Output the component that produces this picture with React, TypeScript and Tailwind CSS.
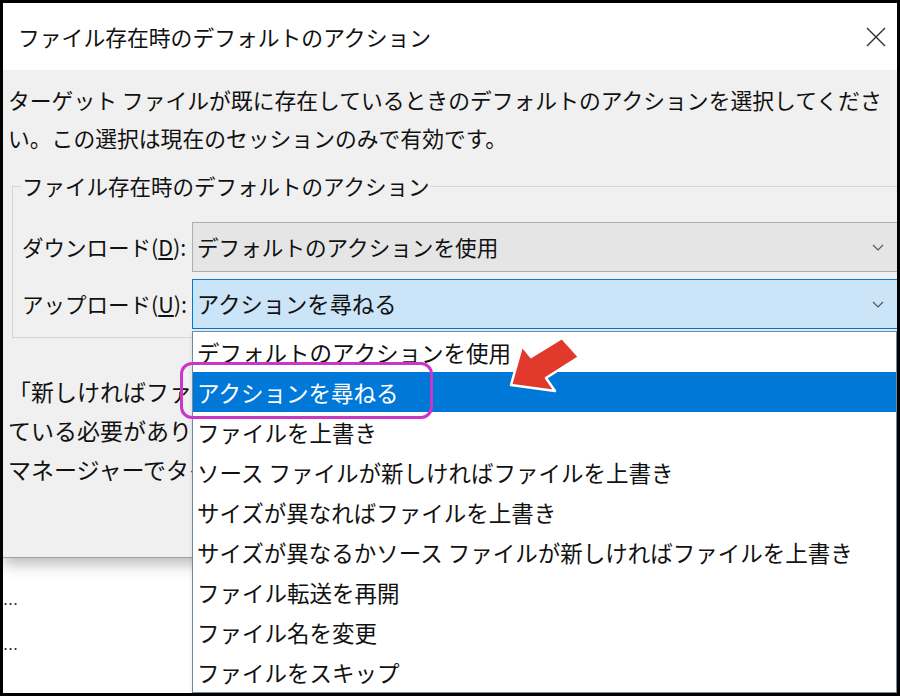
import React from "react";

const items = [
  "デフォルトのアクションを使用",
  "アクションを尋ねる",
  "ファイルを上書き",
  "ソース ファイルが新しければファイルを上書き",
  "サイズが異なればファイルを上書き",
  "サイズが異なるかソース ファイルが新しければファイルを上書き",
  "ファイル転送を再開",
  "ファイル名を変更",
  "ファイルをスキップ",
];

const Chevron = () => (
  <svg width="12" height="7" viewBox="0 0 12 7" fill="none">
    <polyline points="1,1 6,6 11,1" stroke="#555" strokeWidth="1.2" />
  </svg>
);

const App = () => {
  return (
    <div
      className="w-[900px] h-[696px] border-[3px] border-black bg-white relative overflow-hidden text-[#111]"
      style={{ fontFamily: '"Noto Sans CJK JP", "Noto Sans", sans-serif' }}
    >
      {/* dialog */}
      <div className="shadow-[0_6px_14px_rgba(0,0,0,0.28)]">
        <div className="h-[67px] bg-white flex items-center justify-between pl-[15px] pr-[11px]">
          <span className="text-[21.8px] leading-[30px] whitespace-nowrap">
            ファイル存在時のデフォルトのアクション
          </span>
          <svg width="20" height="20" viewBox="0 0 20 20" fill="none">
            <line x1="1" y1="1" x2="19" y2="19" stroke="#333" strokeWidth="1.4" />
            <line x1="19" y1="1" x2="1" y2="19" stroke="#333" strokeWidth="1.4" />
          </svg>
        </div>

        <div className="h-[488px] bg-[#f0f0f0] border-b border-[#a0a0a0] overflow-hidden">
          <div className="pt-[11px] pl-[5px] text-[21.8px] leading-[38px] whitespace-nowrap">
            <div>ターゲット ファイルが既に存在しているときのデフォルトのアクションを選択してくださ</div>
            <div>い。この選択は現在のセッションのみで有効です。</div>
          </div>

          <fieldset className="mt-[14px] ml-[9px] -mr-[10px] border border-[#d5d5d5] pl-[9px] pt-[21px] pb-[8px]">
            <legend className="px-[1px] -ml-[1px] text-[21.5px] leading-[30px] whitespace-nowrap">
              ファイル存在時のデフォルトのアクション
            </legend>
            <div className="flex flex-col gap-[7px]">
              <div className="flex items-center">
                <span className="w-[170px] text-[21.5px] whitespace-nowrap">
                  ダウンロード(<span className="underline">D</span>):
                </span>
                <div className="flex-1 h-[50px] bg-[#e5e5e5] border border-[#adadad] flex items-center justify-between pl-[4px] pr-[13px] mr-[8px]">
                  <span className="text-[21.6px] whitespace-nowrap">デフォルトのアクションを使用</span>
                  <Chevron />
                </div>
              </div>
              <div className="flex items-center">
                <span className="w-[170px] text-[21.5px] whitespace-nowrap">
                  アップロード(<span className="underline">U</span>):
                </span>
                <div className="flex-1 h-[50px] bg-[#cce4f7] border border-[#0078d7] flex items-center justify-between pl-[4px] pr-[13px] mr-[8px]">
                  <span className="text-[22.3px] whitespace-nowrap">アクションを尋ねる</span>
                  <Chevron />
                </div>
              </div>
            </div>
          </fieldset>

          {/* paragraph mostly hidden under the open list */}
          <div className="mt-[34px] ml-[5px] w-[184px] overflow-hidden text-[23px] leading-[39px] whitespace-nowrap">
            <div>「新しければファイ</div>
            <div>ている必要があり</div>
            <div>マネージャーでタイ</div>
          </div>
        </div>
      </div>

      {/* page behind the dialog */}
      <div
        className="mt-[19px] text-[18px] leading-[45px] text-[#333]"
        style={{ fontFamily: '"Liberation Sans", sans-serif' }}
      >
        <div>...</div>
        <div>...</div>
        <div>...</div>
      </div>

      {/* open dropdown list */}
      <div className="absolute left-[189px] top-[328px] right-0 bottom-0 bg-white border border-[#6f8aa3] shadow-[2px_2px_6px_rgba(0,0,0,0.2)]">
        {items.map((item, i) => (
          <div
            key={item}
            className={
              i === 1
                ? "h-[40px] leading-[40px] pl-[4px] text-[22.5px] whitespace-nowrap bg-[#0078d7] text-white"
                : "h-[40px] leading-[40px] pl-[4px] text-[22.5px] whitespace-nowrap"
            }
          >
            {item}
          </div>
        ))}
      </div>

      {/* annotation: magenta frame */}
      <div className="absolute left-[177px] top-[359px] w-[253px] h-[57px] border-[3px] border-[#c837c8] rounded-[12px]" />

      {/* annotation: red arrow */}
      <svg
        className="absolute left-[497px] top-[327px]"
        width="90"
        height="70"
        viewBox="0 0 90 70"
      >
        <polygon
          points="11,55 22,16 31,27 62,8 79,27 46,48 55,61"
          fill="#e2392d"
          stroke="#fff"
          strokeWidth="2.5"
          strokeLinejoin="round"
        />
      </svg>
    </div>
  );
};

export default App;
